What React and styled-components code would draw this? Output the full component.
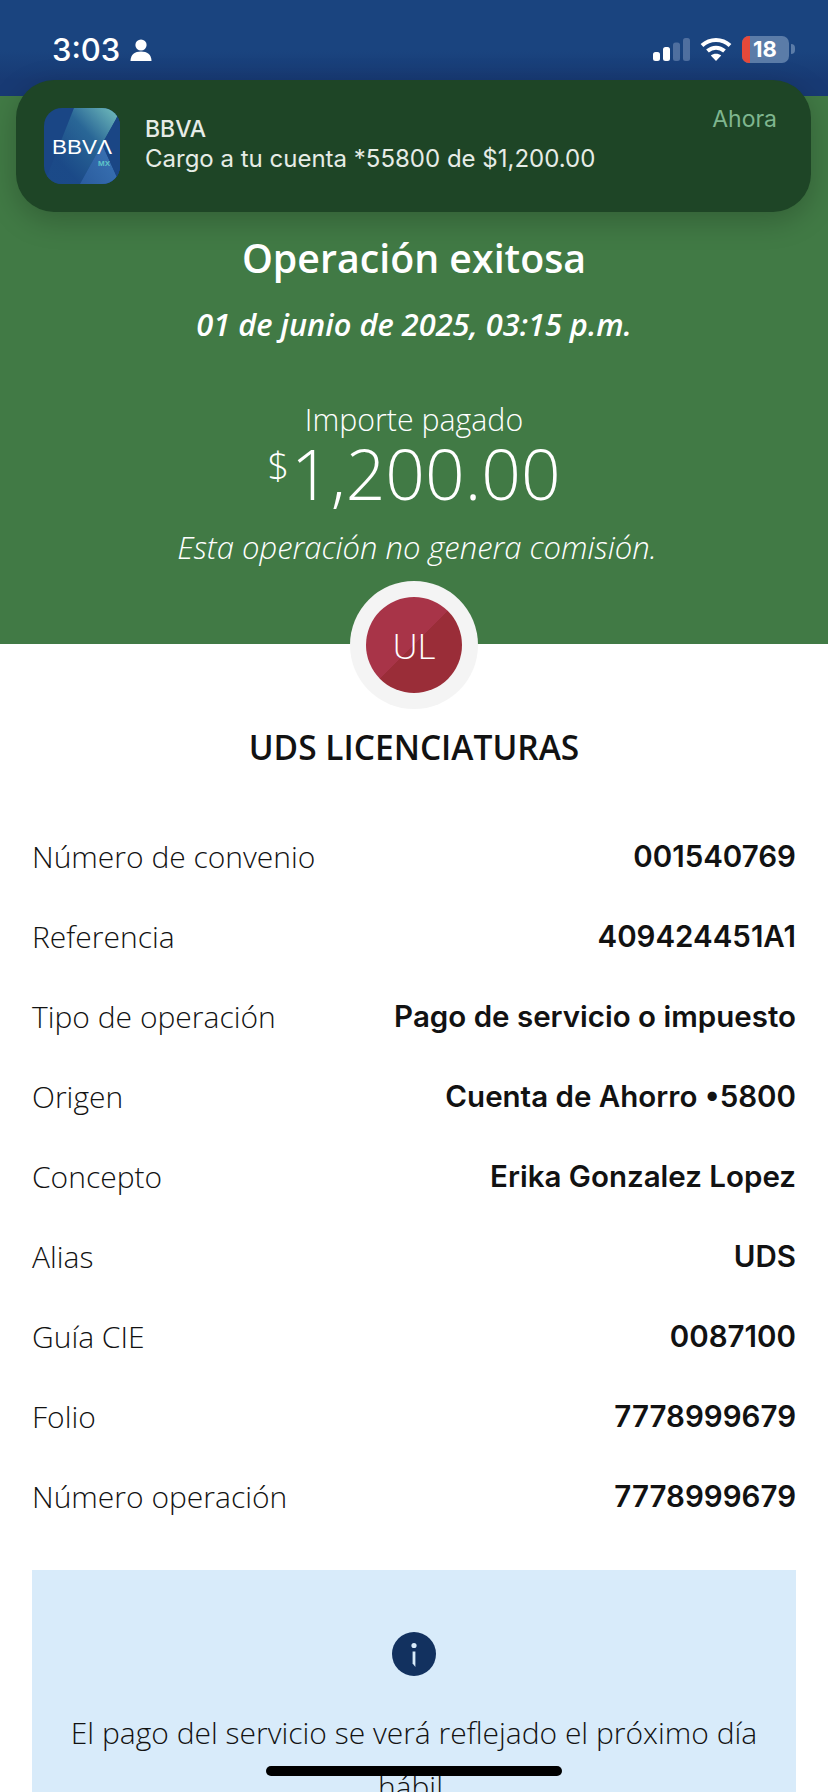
import React from "react";
import styled, { createGlobalStyle } from "styled-components";

const rows = [
  ["Número de convenio", "001540769"],
  ["Referencia", "409424451A1"],
  ["Tipo de operación", "Pago de servicio o impuesto"],
  ["Origen", "Cuenta de Ahorro •5800"],
  ["Concepto", "Erika Gonzalez Lopez"],
  ["Alias", "UDS"],
  ["Guía CIE", "0087100"],
  ["Folio", "7778999679"],
  ["Número operación", "7778999679"],
];

function App() {
  return (
    <Page>
      <GlobalStyle />
      <StatusBar>
        <Clock>
          3:03
          <svg width="22" height="22" viewBox="0 0 22 22" fill="#fff">
            <circle cx="11" cy="6" r="5.6" />
            <path d="M0.5 22 C0.5 15.5 5 12.6 11 12.6 C17 12.6 21.5 15.5 21.5 22 Z" />
          </svg>
        </Clock>
        <StatusIcons>
          <svg width="37" height="23" viewBox="0 0 37 23">
            <rect x="0" y="14" width="7" height="9" rx="2.5" fill="#fff" />
            <rect x="10" y="9" width="7" height="14" rx="2.5" fill="#fff" />
            <rect x="20" y="4.5" width="7" height="18.5" rx="2.5" fill="#4f6f9f" />
            <rect x="30" y="0" width="7" height="23" rx="2.5" fill="#4f6f9f" />
          </svg>
          <svg width="32" height="24" viewBox="0 0 32 24" fill="none" stroke="#fff" strokeWidth="4">
            <path d="M2 8.5 C10 1 22 1 30 8.5" />
            <path d="M7.5 14 C12.5 9.5 19.5 9.5 24.5 14" />
            <path d="M16 24 L10.8 18.6 C13.5 16 18.5 16 21.2 18.6 Z" fill="#fff" stroke="none" />
          </svg>
          <Battery>
            <BatteryFill />
            <BatteryLevel>18</BatteryLevel>
          </Battery>
          <BatteryCap />
        </StatusIcons>
      </StatusBar>

      <Banner>
        <AppIcon>
          <svg width="76" height="76" viewBox="0 0 76 76">
            <defs>
              <linearGradient id="glow" x1="0.2" y1="0.7" x2="0.9" y2="0.05">
                <stop offset="0" stopColor="#1b4a88" />
                <stop offset="0.55" stopColor="#2b6a98" />
                <stop offset="1" stopColor="#6fbcbc" />
              </linearGradient>
              <linearGradient id="low" x1="0" y1="1" x2="1" y2="0.3">
                <stop offset="0" stopColor="#2a5c9e" />
                <stop offset="1" stopColor="#3a73b4" />
              </linearGradient>
            </defs>
            <rect width="76" height="76" fill="#1a4685" />
            <path d="M30 0 H76 L50 76 H0 Z" fill="url(#glow)" opacity="0.9" />
            <path d="M76 4 L76 76 L36 76 Z" fill="#1a4685" />
            <path d="M36 76 L58 36 L76 76 Z" fill="url(#low)" />
            <path d="M58 36 L76 4 V76 Z" fill="#1a4685" />
            <text x="8" y="46" fontFamily="'Liberation Sans', sans-serif" fontSize="20" fill="#fff" textLength="60" lengthAdjust="spacingAndGlyphs">BBVΛ</text>
            <text x="54" y="58" fontFamily="'Liberation Sans', sans-serif" fontSize="8" fontWeight="700" fill="#5fc4c8" textLength="12" lengthAdjust="spacingAndGlyphs">MX</text>
          </svg>
        </AppIcon>
        <BannerText>
          <BannerTitle>BBVA</BannerTitle>
          <BannerBody>Cargo a tu cuenta *55800 de $1,200.00</BannerBody>
        </BannerText>
        <BannerTime>Ahora</BannerTime>
      </Banner>

      <Hero>
        <Title>Operación exitosa</Title>
        <DateLine>01 de junio de 2025, 03:15 p.m.</DateLine>
        <AmountLabel>Importe pagado</AmountLabel>
        <Amount>
          <sup>$</sup>1,200.00
        </Amount>
        <Note>Esta operación no genera comisión.</Note>
      </Hero>

      <Avatar>
        <AvatarInner>UL</AvatarInner>
      </Avatar>
      <Name>UDS LICENCIATURAS</Name>

      <Details>
        {rows.map(([label, value]) => (
          <Row key={label}>
            <Label>{label}</Label>
            <Value>{value}</Value>
          </Row>
        ))}
      </Details>

      <InfoBox>
        <InfoIcon>
          <svg width="44" height="44" viewBox="0 0 44 44">
            <circle cx="22" cy="22" r="22" fill="#12315f" />
            <circle cx="22" cy="13.5" r="2.6" fill="#d8ebfa" />
            <path d="M20.6 19.5 H23.4 V35 L20.6 31.5 Z" fill="#d8ebfa" />
          </svg>
        </InfoIcon>
        <InfoText>El pago del servicio se verá reflejado el próximo día hábil.</InfoText>
      </InfoBox>

      <HomeBar />
    </Page>
  );
}

export default App;

const GlobalStyle = createGlobalStyle`
  html, body {
    margin: 0;
    padding: 0;
    background: #fff;
  }
`;

const Page = styled.div`
  position: relative;
  width: 828px;
  height: 1792px;
  overflow: hidden;
  background: #fff;
  font-family: "Open Sans", "Liberation Sans", sans-serif;
  color: #121212;
`;

const StatusBar = styled.div`
  height: 96px;
  box-sizing: border-box;
  padding: 31px 33px 0 52px;
  display: flex;
  justify-content: space-between;
  align-items: flex-start;
  background: linear-gradient(#1a447f 0, #1a447f 50px, #183a74 80px, #183a74 96px);
  color: #fff;
`;

const Clock = styled.div`
  display: flex;
  align-items: center;
  gap: 10px;
  font-family: Inter, sans-serif;
  font-size: 31px;
  font-weight: 500;
  line-height: 38px;
`;

const StatusIcons = styled.div`
  display: flex;
  align-items: center;
  gap: 10px;
  height: 36px;
`;

const Battery = styled.div`
  position: relative;
  width: 47px;
  height: 27px;
  border-radius: 7px;
  overflow: hidden;
  background: #5b7ca8;
  display: flex;
  align-items: center;
  justify-content: center;
`;

const BatteryFill = styled.div`
  position: absolute;
  left: 0;
  top: 0;
  bottom: 0;
  width: 8px;
  background: #e5493a;
`;

const BatteryLevel = styled.span`
  position: relative;
  font-family: Inter, sans-serif;
  font-size: 22px;
  font-weight: 700;
  color: #fff;
  padding-right: 1px;
`;

const BatteryCap = styled.div`
  width: 4px;
  height: 10px;
  margin-left: -8px;
  border-radius: 0 4px 4px 0;
  background: #5b7ca8;
`;

const Banner = styled.div`
  position: absolute;
  left: 16px;
  top: 80px;
  width: 795px;
  height: 132px;
  box-sizing: border-box;
  padding: 28px 34px 0 28px;
  display: flex;
  align-items: flex-start;
  gap: 25px;
  border-radius: 38px;
  background: #1e4526;
  box-shadow: 0 8px 30px rgba(0, 0, 0, 0.22);
`;

const AppIcon = styled.div`
  width: 76px;
  height: 76px;
  flex: none;
  border-radius: 18px;
  overflow: hidden;
`;

const BannerText = styled.div`
  flex: 1;
  padding-top: 7px;
  font-family: Inter, sans-serif;
  color: #e6ece6;
`;

const BannerTitle = styled.div`
  font-size: 23px;
  font-weight: 500;
  line-height: 29px;
`;

const BannerBody = styled.div`
  font-size: 24px;
  line-height: 29px;
`;

const BannerTime = styled.div`
  margin-top: -3px;
  font-family: Inter, sans-serif;
  font-size: 23px;
  line-height: 28px;
  color: #7fb68f;
`;

const Hero = styled.div`
  height: 548px;
  box-sizing: border-box;
  padding-top: 136px;
  background: #417a45;
  color: #fff;
  text-align: center;
`;

const Title = styled.div`
  font-size: 39.3px;
  font-weight: 600;
  line-height: 52px;
`;

const DateLine = styled.div`
  margin-top: 20px;
  font-size: 30.8px;
  font-weight: 600;
  font-style: italic;
  line-height: 40px;
`;

const AmountLabel = styled.div`
  margin-top: 56px;
  font-size: 30.3px;
  font-weight: 300;
  line-height: 40px;
`;

const Amount = styled.div`
  margin-top: -5px;
  font-size: 69.5px;
  font-weight: 300;
  line-height: 76px;

  sup {
    font-size: 38px;
    line-height: 0;
    vertical-align: 20px;
    margin-right: 2px;
  }
`;

const Note = styled.div`
  margin-top: 16px;
  padding-left: 6px;
  font-size: 31px;
  font-weight: 300;
  font-style: italic;
  line-height: 40px;
`;

const Avatar = styled.div`
  width: 128px;
  height: 128px;
  margin: -63px auto 0;
  position: relative;
  box-sizing: border-box;
  padding: 16px;
  border-radius: 50%;
  background: #f4f4f4;
`;

const AvatarInner = styled.div`
  width: 96px;
  height: 96px;
  border-radius: 50%;
  display: flex;
  align-items: center;
  justify-content: center;
  background: linear-gradient(135deg, #a83448 50%, #9a2d38 50%);
  color: #fff;
  font-size: 35px;
  font-weight: 300;
`;

const Name = styled.div`
  margin-top: 16px;
  font-size: 33.5px;
  font-weight: 600;
  line-height: 44px;
  text-align: center;
`;

const Details = styled.div`
  margin-top: 47px;
  padding: 0 32px;
`;

const Row = styled.div`
  height: 80px;
  display: flex;
  justify-content: space-between;
  align-items: center;
  font-size: 30px;
`;

const Label = styled.span`
  font-weight: 300;
`;

const Value = styled.span`
  font-family: Inter, sans-serif;
  font-size: 29.5px;
  font-weight: 600;
`;

const InfoBox = styled.div`
  margin: 34px 32px 0;
  padding: 62px 32px 0;
  height: 400px;
  box-sizing: border-box;
  background: #d8ebfa;
  text-align: center;
`;

const InfoIcon = styled.div`
  height: 44px;
`;

const InfoText = styled.div`
  margin-top: 30px;
  font-size: 30px;
  font-weight: 300;
  line-height: 54px;
`;

const HomeBar = styled.div`
  position: absolute;
  left: 266px;
  top: 1766px;
  width: 296px;
  height: 10px;
  border-radius: 5px;
  background: #000;
`;
